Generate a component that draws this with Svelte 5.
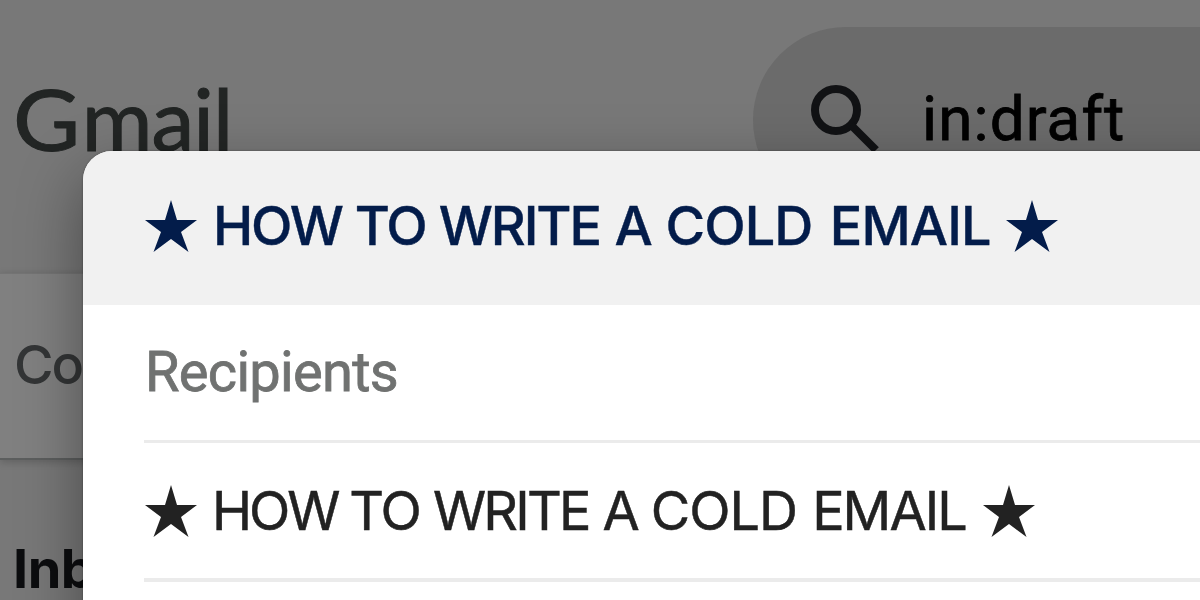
<script>
  const query = 'in:draft';

  // spacing: tracking inside the word, gap: space after it
  const title = [
    { text: 'HOW', spacing: -2.2, gap: 13 },
    { text: 'TO', spacing: -2, gap: 13 },
    { text: 'WRITE', spacing: -2.1, gap: 14.5 },
    { text: 'A', spacing: -1.7, gap: 14.5 },
    { text: 'COLD', spacing: -0.9, gap: 17.3 },
    { text: 'EMAIL', spacing: -0.9, gap: 13 }
  ];
  const subject = [
    { text: 'HOW', spacing: -3.1, gap: 12 },
    { text: 'TO', spacing: -2.1, gap: 13.2 },
    { text: 'WRITE', spacing: -2.8, gap: 13.8 },
    { text: 'A', spacing: -2.5, gap: 13.5 },
    { text: 'COLD', spacing: -1, gap: 15.2 },
    { text: 'EMAIL', spacing: -2, gap: 15 }
  ];
</script>

{#snippet star()}
  <svg class="star" viewBox="0 0 52 52" aria-hidden="true">
    <path d="M26 0 32 20H52L36 32 43.5 52 26 39 8.5 52 16 32 0 20H20Z" />
  </svg>
{/snippet}

{#snippet line(words)}
  {@render star()}
  <div class="words">
    {#each words as word}
      <span style="letter-spacing: {word.spacing}px; margin-right: {word.gap}px">{word.text}</span>
    {/each}
  </div>
  {@render star()}
{/snippet}

<div class="mail">
  <header class="topbar">
    <div class="logo"><span class="initial">G</span>mail</div>
    <div class="search">
      <svg class="search-icon" viewBox="0 0 70 70" aria-hidden="true">
        <circle cx="25" cy="25" r="21" />
        <path d="M40 40 65 65" />
      </svg>
      <span>{query}</span>
    </div>
  </header>
  <div class="toolbar">Co</div>
  <nav class="folders">Inb</nav>

  <section class="compose">
    <div class="compose-title">{@render line(title)}</div>
    <div class="compose-body">
      <div class="recipients">Recipients</div>
      <div class="subject">{@render line(subject)}</div>
    </div>
  </section>
</div>

<style>
  :global(body) {
    margin: 0;
  }

  .mail {
    position: relative;
    width: 1200px;
    height: 600px;
    overflow: hidden;
    background: #787878;
    font-family: Roboto, sans-serif;
    white-space: nowrap;
  }

  .topbar {
    display: flex;
    justify-content: space-between;
    height: 273px;
  }

  .logo {
    padding: 66px 0 0 13px;
    color: #222524;
    font-family: Lato, sans-serif;
    font-size: 86px;
    line-height: 104px;
    letter-spacing: -1px;
    -webkit-text-stroke: 1px #222524;
  }

  .initial {
    display: inline-block;
    margin-right: 7px;
    transform: scaleX(1.07);
    transform-origin: left;
  }

  .search {
    box-sizing: border-box;
    display: flex;
    width: 447px;
    height: 186px;
    margin-top: 27px;
    padding: 58px 0 0 58px;
    border-radius: 93px 0 0 93px;
    background: #6b6b6b;
    color: #020202;
    font-size: 62px;
    line-height: 68px;
    letter-spacing: 1.1px;
    -webkit-text-stroke: 0.8px #020202;
  }

  .search-icon {
    width: 70px;
    height: 70px;
    margin-right: 41px;
    fill: none;
    stroke: #111214;
    stroke-width: 8;
  }

  .toolbar {
    box-sizing: border-box;
    height: 187px;
    padding: 58px 0 0 14px;
    border-top: 1px solid #747474;
    border-bottom: 2px solid #5c5e5e;
    background: #808080;
    box-shadow: 0 2px 8px rgba(0, 0, 0, 0.2);
    color: #333536;
    font-family: Inter, sans-serif;
    font-size: 54px;
    font-weight: 500;
    line-height: 66px;
    letter-spacing: -2px;
  }

  .folders {
    padding: 76px 0 0 13px;
    color: #0c0d0f;
    font-family: Inter, sans-serif;
    font-size: 54px;
    font-weight: 700;
    line-height: 66px;
    letter-spacing: -0.5px;
  }

  /* compose window over the mailbox */
  .compose {
    position: absolute;
    top: 151px;
    left: 83px;
    width: 1300px;
    height: 700px;
    border-radius: 29px 0 0 0;
    background: #fff;
    box-shadow: 0 0 2px rgba(0, 0, 0, 0.4), 0 24px 64px rgba(0, 0, 0, 0.4);
    overflow: hidden;
  }

  .compose-title,
  .subject {
    display: flex;
    align-items: center;
    font-family: Inter, sans-serif;
    font-size: 54px;
    line-height: 66px;
  }

  .compose-title {
    box-sizing: border-box;
    height: 154px;
    padding: 0 0 4px 62px;
    background: #f1f1f1;
    color: #031c4a;
    font-weight: 500;
    -webkit-text-stroke: 0.4px #031c4a;
  }

  .compose-body {
    padding-left: 61px;
  }

  .recipients {
    height: 135px;
    padding-left: 1px;
    border-bottom: 3px solid #ebebeb;
    color: #707271;
    font-size: 56px;
    line-height: 134px;
    letter-spacing: -0.7px;
    -webkit-text-stroke: 0.8px #707271;
  }

  .subject {
    height: 135px;
    border-bottom: 4px solid #ebebeb;
    color: #222;
    -webkit-text-stroke: 0.5px #222;
  }

  .subject .star:first-child {
    margin-left: 1px;
    margin-right: -1px;
  }

  .words {
    display: flex;
    margin: 0 2px 0 16px;
  }

  .star {
    width: 52px;
    height: 52px;
    fill: currentColor;
  }
</style>
